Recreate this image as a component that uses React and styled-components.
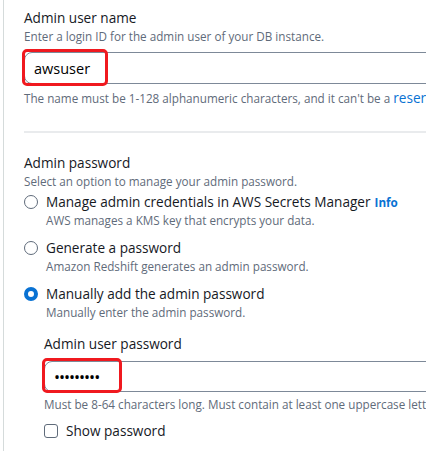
import React from 'react';
import styled, { createGlobalStyle } from 'styled-components';

const GlobalStyle = createGlobalStyle`
  html, body {
    margin: 0;
    padding: 0;
    background: #fff;
    overflow: hidden;
  }
  body {
    font-family: "Open Sans", "Noto Sans", sans-serif;
    color: #16191f;
  }
`;

const Panel = styled.div`
  margin-left: 3px;
  border-left: 1px solid #d5dbdb;
  padding: 8px 0 0 20px;
  width: 760px;
  height: 451px;
  box-sizing: border-box;
`;

const Field = styled.div`
  display: flex;
  flex-direction: column;
`;

const Label = styled.div`
  font-size: 13.6px;
  line-height: 20px;
  color: #16191f;
  white-space: nowrap;
`;

const Description = styled.div`
  font-size: 11.7px;
  line-height: 16px;
  color: #5f6b7a;
  white-space: nowrap;
`;

const Constraint = styled(Description)`
  margin-top: ${(p) => p.top || 6}px;
`;

const InputWrap = styled.div`
  position: relative;
  margin-top: ${(p) => p.top || 6}px;
`;

const Input = styled.div`
  height: ${(p) => (p.dots ? 31 : 32)}px;
  box-sizing: border-box;
  border: 1px solid #7d8998;
  border-radius: 8px;
  padding: 0 9px;
  display: flex;
  align-items: center;
  font-size: ${(p) => (p.dots ? 16 : 14.5)}px;
  letter-spacing: ${(p) => (p.dots ? '-1px' : '0')};
  color: #000;
`;

const Highlight = styled.div`
  position: absolute;
  left: -2px;
  top: -3px;
  width: ${(p) => p.w}px;
  height: ${(p) => p.h}px;
  border: 3px solid #f0191f;
  border-radius: 5px;
  box-sizing: border-box;
`;

const Link = styled.span`
  color: #0972d3;
  font-size: 13.6px;
`;

const Divider = styled.div`
  height: 2px;
  background: #e9ebed;
  margin: 25px 0 20px;
`;

const RadioGroup = styled.div`
  display: flex;
  flex-direction: column;
  gap: 10px;
  margin-top: 3px;
`;

const Option = styled.div`
  display: grid;
  grid-template-columns: 22px auto;
  align-items: start;
`;

const RadioCircle = styled.span`
  width: 14px;
  height: 14px;
  margin-top: 3px;
  border-radius: 50%;
  box-sizing: border-box;
  border: ${(p) => (p.checked ? '4px solid #0972d3' : '1.5px solid #5f6b7a')};
  background: #fff;
`;

const OptionText = styled.div`
  display: flex;
  flex-direction: column;
`;

const Info = styled.span`
  color: #0972d3;
  font-size: 11.7px;
  font-weight: 700;
  margin-left: 4px;
`;

const Nested = styled.div`
  padding-left: 20px;
  margin-top: 14px;
`;

const CheckRow = styled.div`
  display: flex;
  align-items: center;
  gap: 8px;
  margin-top: 9px;
`;

const CheckBox = styled.span`
  width: 14px;
  height: 14px;
  border: 1.5px solid #5f6b7a;
  border-radius: 3px;
  box-sizing: border-box;
`;

const options = [
  {
    label: 'Manage admin credentials in AWS Secrets Manager',
    desc: 'AWS manages a KMS key that encrypts your data.',
    info: true,
  },
  {
    label: 'Generate a password',
    desc: 'Amazon Redshift generates an admin password.',
  },
  {
    label: 'Manually add the admin password',
    desc: 'Manually enter the admin password.',
    checked: true,
  },
];

export default function App() {
  return (
    <>
      <GlobalStyle />
      <Panel>
        <Field>
          <Label>Admin user name</Label>
          <Description>Enter a login ID for the admin user of your DB instance.</Description>
          <InputWrap top={8}>
            <Input>awsuser</Input>
            <Highlight w={86} h={37} />
          </InputWrap>
          <Constraint top={6}>
            The name must be 1-128 alphanumeric characters, and it can't be a{' '}
            <Link>reserved word</Link>
          </Constraint>
        </Field>

        <Divider />

        <Field>
          <Label>Admin password</Label>
          <Description>Select an option to manage your admin password.</Description>
          <RadioGroup>
            {options.map((o) => (
              <Option key={o.label}>
                <RadioCircle checked={o.checked} />
                <OptionText>
                  <Label>
                    {o.label}
                    {o.info && <Info>Info</Info>}
                  </Label>
                  <Description>{o.desc}</Description>
                </OptionText>
              </Option>
            ))}
          </RadioGroup>

          <Nested>
            <Label>Admin user password</Label>
            <InputWrap top={7}>
              <Input dots>•••••••••</Input>
              <Highlight w={80} h={35} />
            </InputWrap>
            <Constraint top={4}>
              Must be 8-64 characters long. Must contain at least one uppercase letter, one lowercase letter, and one number.
            </Constraint>
            <CheckRow>
              <CheckBox />
              <Label>Show password</Label>
            </CheckRow>
          </Nested>
        </Field>
      </Panel>
    </>
  );
}
